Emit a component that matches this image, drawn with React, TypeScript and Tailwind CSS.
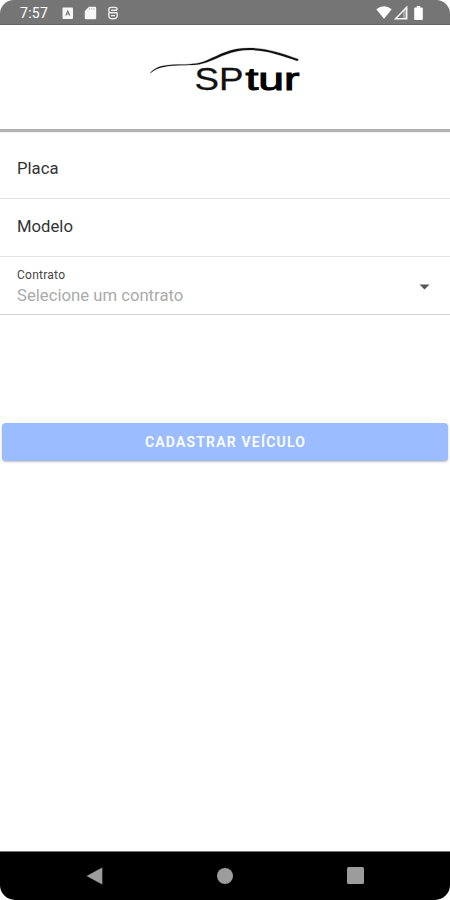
function StatusBar() {
  return (
    <div className="flex h-[25px] shrink-0 items-center justify-between rounded-t-[14px] border-b border-[#666] bg-[#757575] pt-px pr-[27px] pl-[20px] text-white">
      <div className="flex items-center">
        <span className="w-[29px] text-[14px] leading-[24px] tracking-[0.3px]">7:57</span>
        <svg className="ml-[13px]" width="12" height="12" viewBox="0 0 12 12">
          <rect x="0.5" y="0.5" width="10.5" height="11.5" rx="1" fill="#f7f7f7" />
          <path d="M3.8 8.6 5.8 4 7.8 8.6M4.5 7H7" fill="none" stroke="#777" strokeWidth="1.1" />
        </svg>
        <svg className="ml-[10px]" width="13" height="14" viewBox="0 0 13 14">
          <path d="M5 0.8H11Q12.2 0.8 12.2 2V12Q12.2 13.2 11 13.2H2Q0.8 13.2 0.8 12V5Z" fill="#f7f7f7" />
          <path d="M5.5 2v2M7.7 2v2M9.9 2v2" stroke="#bbb" strokeWidth="0.8" />
        </svg>
        <svg className="ml-[10px]" width="12" height="14" viewBox="0 0 12 14">
          <path
            d="M10 4V3Q10 1.4 8 1.4H4Q1.8 1.4 1.8 3.5V4.8Q1.8 6.8 3.5 6.8H10.2M1.8 7V9.5Q1.8 12.8 6 12.8Q10.2 12.8 10.2 9.5V6.6M4 4.2H10M4 9.6H8"
            fill="none"
            stroke="#eee"
            strokeWidth="1.4"
          />
        </svg>
      </div>

      <div className="flex items-center">
        <svg width="16" height="13" viewBox="0 0 16 13">
          <path d="M0.3 3.2Q8-2.7 15.7 3.2L8 12.8Z" fill="#fff" />
        </svg>
        <svg className="ml-[2px]" width="14" height="14" viewBox="0 0 14 14">
          <path d="M1.5 12.7 12.7 1.2V12.7Z" fill="none" stroke="#f5f5f5" strokeWidth="1.5" />
          <path d="M9 5.5 12.5 1.5V12.7H9Z" fill="#fff" fillOpacity="0.35" />
        </svg>
        <svg className="ml-[6px]" width="9" height="14" viewBox="0 0 9 14">
          <path d="M2.8 0H6.2V1.5H7.8Q8.8 1.5 8.8 2.5V13Q8.8 14 7.8 14H1.2Q0.2 14 0.2 13V2.5Q0.2 1.5 1.2 1.5H2.8Z" fill="#fff" />
        </svg>
      </div>
    </div>
  );
}

function Logo() {
  return (
    <svg width="170" height="65" viewBox="0 0 170 65" className="font-['Liberation_Sans',Arial,sans-serif]">
      <path
        d="M10 38.5C15 31.5 23 30.3 36 29.6C50 29.2 57 29.4 67 25.2C80 19.5 90 13 109 13C127 13 141 18 158.5 24.2L157.5 26C140 20 127 15.3 110 15C92 14.8 81 22 67 27.3C57 30.8 49 30 36 30.4C23 31 16 33 10 38.5Z"
        fill="#111"
        stroke="#111"
        strokeWidth="0.2"
      />
      <text x="54.5" y="54.5" fontSize="32" textLength="49" lengthAdjust="spacingAndGlyphs" fill="#111" stroke="#111" strokeWidth="0.3">
        SP
      </text>
      <text x="105.5" y="54.5" fontSize="32" textLength="54" lengthAdjust="spacingAndGlyphs" fill="#000" stroke="#000" strokeWidth="1">
        tur
      </text>
    </svg>
  );
}

function Field({ label }: { label: string }) {
  return (
    <div className="flex h-[58px] items-center border-b border-[#e4e4e4] px-[17px] pb-px text-[16.7px] text-[#333]">
      {label}
    </div>
  );
}

function ContractSelect() {
  return (
    <div className="flex h-[58px] items-center justify-between border-b border-[#d2d2d2] pr-[20px] pl-[17px]">
      <div className="pt-[3px]">
        <div className="text-[12px] leading-[18px] tracking-[0.25px] text-[#444]">Contrato</div>
        <div className="text-[16.7px] leading-[24px] text-[#aaa]">Selecione um contrato</div>
      </div>
      <svg className="mt-[2px]" width="11" height="6" viewBox="0 0 11 6">
        <path d="M0.5 0.5H10.5L5.5 5.5Z" fill="#555" />
      </svg>
    </div>
  );
}

function NavBar() {
  return (
    <div className="flex h-[49px] shrink-0 items-center justify-between rounded-b-[15px] border-t border-[#777] bg-black px-[86px] pb-px">
      <svg width="17" height="18" viewBox="0 0 17 18">
        <path d="M0.5 9 16.3 0.5V17.5Z" fill="#9c9c9c" />
      </svg>
      <div className="size-[16px] rounded-full bg-[#9c9c9c]" />
      <div className="size-[17px] rounded-[1.5px] bg-[#9c9c9c]" />
    </div>
  );
}

export default function App() {
  return (
    <div className="flex h-[900px] w-[450px] flex-col bg-white font-[Roboto,sans-serif]">
      <StatusBar />

      <header className="flex h-[104px] shrink-0 justify-center pt-[10px] shadow-[0_2px_1px_1px_rgba(0,0,0,0.3)]">
        <Logo />
      </header>

      <main className="flex-1 pt-[12px]">
        <Field label="Placa" />
        <Field label="Modelo" />
        <ContractSelect />

        <div className="px-[2px] pt-[108px]">
          <button className="flex h-[38px] w-full items-center justify-center rounded-[4px] bg-[#9bbdff] pl-px text-[14px] font-semibold tracking-[1.2px] text-white shadow-[0_1px_2px_rgba(0,0,0,0.25)]">
            CADASTRAR VEÍCULO
          </button>
        </div>
      </main>

      <NavBar />
    </div>
  );
}
